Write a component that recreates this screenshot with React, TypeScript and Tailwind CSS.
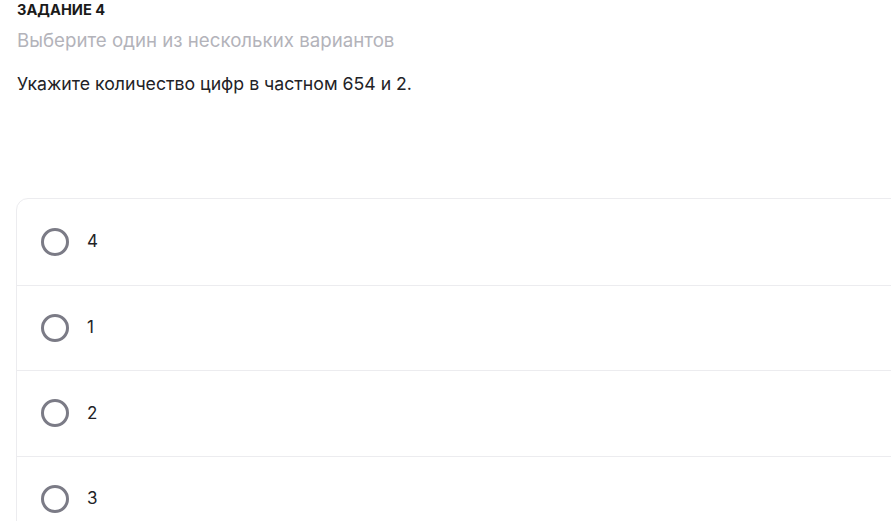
const options = ["4", "1", "2", "3"];

export default function App() {
  return (
    <div className="min-h-[521px] bg-white overflow-hidden font-['Inter',sans-serif]">
      <div className="pl-[17px] pt-[0px]">
        <h1 className="text-[14.6px] font-bold leading-[20px] text-[#1a1a1a]">ЗАДАНИЕ 4</h1>
        <p className="mt-[9px] text-[18.7px] leading-[24px] text-[#b3b3ba]">
          Выберите один из нескольких вариантов
        </p>
        <p className="mt-[19px] text-[17.7px] leading-[24px] text-[#222226]">
          Укажите количество цифр в частном 654 и 2.
        </p>
      </div>
      <div className="ml-[16px] mt-[102px] w-[900px] rounded-tl-[12px] border border-[#ececef]">
        {options.map((opt, i) => (
          <div
            key={i}
            className={
              "flex h-[85.5px] items-center gap-[18px] pl-[24px] " +
              (i > 0 ? "border-t border-[#ececef]" : "")
            }
          >
            <span className="h-[28px] w-[28px] rounded-full border-[3px] border-[#7b7b86]" />
            <span className="text-[17px] text-[#222226]">{opt}</span>
          </div>
        ))}
      </div>
    </div>
  );
}
